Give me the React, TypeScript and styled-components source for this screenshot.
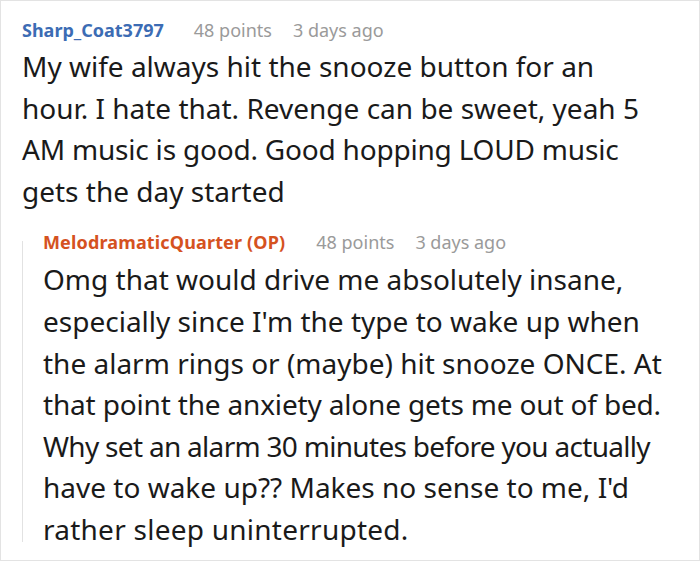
import styled, { createGlobalStyle } from "styled-components";

const GlobalStyle = createGlobalStyle`
  html, body {
    margin: 0;
    padding: 0;
    background: #ffffff;
  }
  body {
    font-family: "Noto Sans", "Open Sans", sans-serif;
    color: #1a1a1a;
  }
`;

interface ILine {
  text: string;
  squeeze?: number;
}

interface IComment {
  author: string;
  isOp?: boolean;
  points: number;
  age: string;
  lines: ILine[];
}

const parent: IComment = {
  author: "Sharp_Coat3797",
  points: 48,
  age: "3 days ago",
  lines: [
    { text: "My wife always hit the snooze button for an" },
    { text: "hour. I hate that. Revenge can be sweet, yeah 5" },
    { text: "AM music is good. Good hopping LOUD music", squeeze: -0.2 },
    { text: "gets the day started" },
  ],
};

const reply: IComment = {
  author: "MelodramaticQuarter (OP)",
  isOp: true,
  points: 48,
  age: "3 days ago",
  lines: [
    { text: "Omg that would drive me absolutely insane," },
    { text: "especially since I'm the type to wake up when" },
    { text: "the alarm rings or (maybe) hit snooze ONCE. At" },
    { text: "that point the anxiety alone gets me out of bed.", squeeze: -0.17 },
    { text: "Why set an alarm 30 minutes before you actually", squeeze: -0.7 },
    { text: "have to wake up?? Makes no sense to me, I'd" },
    { text: "rather sleep uninterrupted.", squeeze: 0.25 },
  ],
};

function Comment({ comment }: { comment: IComment }) {
  return (
    <>
      <Meta>
        <Author $op={comment.isOp}>{comment.author}</Author>
        <Stat>{comment.points} points</Stat>
        <Stat>{comment.age}</Stat>
      </Meta>
      <Body>
        {comment.lines.map((line, i) => (
          <Line key={i} $squeeze={line.squeeze ?? 0}>
            {line.text}
          </Line>
        ))}
      </Body>
    </>
  );
}

export default function App() {
  return (
    <>
      <GlobalStyle />
      <Card>
        <Comment comment={parent} />
        <Reply>
          <Comment comment={reply} />
        </Reply>
      </Card>
    </>
  );
}

const Card = styled.div`
  box-sizing: border-box;
  width: 700px;
  height: 561px;
  border: 1px solid #e3e3e3;
  padding: 17px 0 0 21px;
  overflow: hidden;
`;

const Meta = styled.div`
  display: flex;
  align-items: baseline;
  gap: 21px;
  font-size: 18px;
  line-height: 24px;
`;

const Author = styled.span<{ $op?: boolean }>`
  font-weight: 700;
  color: ${(p) => (p.$op ? "#d5521f" : "#3c6cb4")};
  margin-right: ${(p) => (p.$op ? "10px" : "9px")};
  letter-spacing: ${(p) => (p.$op ? "0.15px" : "0")};
`;

const Stat = styled.span`
  color: #9a9a9a;
`;

const Body = styled.div`
  font-size: 28px;
  line-height: 41.6px;
  margin-top: 4px;
`;

const Line = styled.div<{ $squeeze: number }>`
  white-space: nowrap;
  letter-spacing: ${(p) => p.$squeeze}px;
`;

const Reply = styled.div`
  position: relative;
  margin-top: 18px;
  padding-left: 21px;

  & > div:last-child {
    margin-top: 5px;
  }

  &::before {
    content: "";
    position: absolute;
    left: 0;
    top: 11px;
    width: 1px;
    height: 301px;
    background: #e2e2e2;
  }
`;
